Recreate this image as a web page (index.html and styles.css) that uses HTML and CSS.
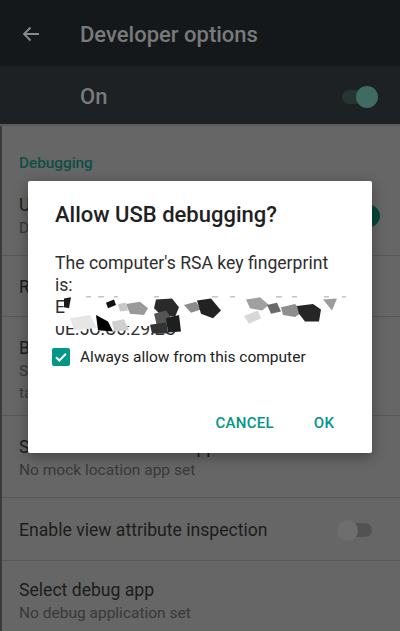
FILE: index.html
```html
<!DOCTYPE html>
<html>
<head>
<meta charset="utf-8">
<link rel="stylesheet" href="styles.css">
</head>
<body>
<div class="screen">
  <header class="toolbar">
    <svg class="back" width="24" height="24" viewBox="0 0 24 24"><path d="M20 12H5.5M11.5 5.5L5 12l6.5 6.5" fill="none" stroke="#8a8a8a" stroke-width="1.8"/></svg>
    <div class="tb-title">Developer options</div>
  </header>
  <div class="onbar">
    <div class="on-label">On</div>
    <div class="switch switch-on"><span class="track"></span><span class="thumb"></span></div>
  </div>
  <main class="list">
    <div class="section">Debugging</div>
    <div class="row r-usb">
      <div class="row-text">
        <div class="title">USB debugging</div>
        <div class="sub">Debug mode when USB is connected</div>
      </div>
      <div class="switch switch-teal"><span class="track"></span><span class="thumb"></span></div>
    </div>
    <div class="row r-revoke">
      <div class="row-text"><div class="title">Revoke USB debugging authorizations</div></div>
    </div>
    <div class="row r-bug">
      <div class="row-text narrow">
        <div class="title">Bug report shortcut</div>
        <div class="sub">Show a button in the power menu for taking a bug report</div>
      </div>
    </div>
    <div class="row r-mock">
      <div class="row-text">
        <div class="title">Select mock location app</div>
        <div class="sub">No mock location app set</div>
      </div>
    </div>
    <div class="row r-enable">
      <div class="row-text"><div class="title">Enable view attribute inspection</div></div>
      <div class="switch switch-off"><span class="track"></span><span class="thumb"></span></div>
    </div>
    <div class="row r-debug">
      <div class="row-text">
        <div class="title">Select debug app</div>
        <div class="sub">No debug application set</div>
      </div>
    </div>
  </main>

  <div class="dialog">
    <div class="d-title">Allow USB debugging?</div>
    <div class="d-body">
      <div>The computer's RSA key fingerprint is:</div>
      <div class="fp">E</div>
      <div class="fp">0E:5C:C5:29:EC</div>
      <svg class="scrub" width="300" height="52" viewBox="0 0 300 52">
        <rect x="16" y="5" width="284" height="21" fill="#fff"/>
        <rect x="0" y="25" width="180" height="8" fill="#fff"/>
        <g fill="#c4c4c4">
          <rect x="31" y="3" width="5" height="1.5"/><rect x="43" y="3" width="6" height="1.5"/>
          <rect x="59" y="3" width="4" height="1.5"/><rect x="99" y="3" width="5" height="1.5"/>
          <rect x="157" y="3" width="6" height="1.5"/><rect x="175" y="3" width="5" height="1.5"/>
          <rect x="221" y="3" width="6" height="1.5"/><rect x="237" y="3" width="5" height="1.5"/>
          <rect x="269" y="3" width="5" height="1.5"/><rect x="287" y="3" width="4" height="1.5"/>
        </g>
        <g transform="translate(7,1) scale(1,1.1)">
          <polygon points="2,4 9,3 7,13 2,12" fill="#1a1a1a"/>
          <polygon points="44,8 52,5 54,10 46,13" fill="#111"/>
          <polygon points="64,9 78,7 86,13 82,19 68,18" fill="#9a9a9a"/>
          <polygon points="56,9 64,8 66,15 58,16" fill="#c8c8c8"/>
          <polygon points="94,5 110,4 117,12 113,21 99,19 92,13" fill="#2a2a2a"/>
          <polygon points="92,18 104,15 111,24 104,31 95,29" fill="#555"/>
          <polygon points="104,22 117,19 119,34 106,35" fill="#1e1e1e"/>
          <polygon points="88,28 104,26 106,36 90,36" fill="#333"/>
          <polygon points="34,19 46,25 51,34 36,33" fill="#000"/>
          <polygon points="8,22 28,19 35,31 12,33" fill="#e6e6e6"/>
          <polygon points="50,25 62,23 67,33 52,34" fill="#cfcfcf"/>
          <polygon points="122,10 134,7 139,14 129,17" fill="#8c8c8c"/>
          <polygon points="135,6 149,4 159,15 151,22 139,18" fill="#222"/>
          <polygon points="184,5 198,3 207,10 200,15 188,13" fill="#a0a0a0"/>
          <polygon points="205,10 215,8 219,16 209,18" fill="#6a6a6a"/>
          <polygon points="219,12 233,9 241,16 233,21 221,19" fill="#8e8e8e"/>
          <polygon points="235,11 251,9 259,14 257,25 243,25 237,18" fill="#252525"/>
          <polygon points="182,20 196,15 199,22 187,27" fill="#d8d8d8"/>
          <polygon points="261,5 275,4 270,15" fill="#9c9c9c"/>
        </g>
      </svg>
    </div>
    <label class="d-check">
      <span class="box"><svg width="18" height="18" viewBox="0 0 18 18"><path d="M4 9.2l3.3 3.3L14 5.8" fill="none" stroke="#fff" stroke-width="2"/></svg></span>
      <span class="check-label">Always allow from this computer</span>
    </label>
    <div class="d-actions">
      <div class="btn">CANCEL</div>
      <div class="btn">OK</div>
    </div>
  </div>
</div>
</body>
</html>
```

FILE: styles.css
```css
* { box-sizing: border-box; }
html, body { margin: 0; padding: 0; }
body {
  font-family: Roboto, "Noto Sans", sans-serif;
  background: #666;
}
.screen {
  position: relative;
  width: 400px;
  height: 631px;
  overflow: hidden;
  background: #666;
}
.toolbar {
  height: 66px;
  background: #15181a;
  display: flex;
  align-items: center;
  padding: 2px 0 0 19px;
}
.back { flex: none; margin-right: 37px; }
.tb-title {
  color: #7a7a7a;
  font-size: 22px;
  font-weight: 500;
}
.onbar {
  height: 60px;
  background: #1d2124;
  display: flex;
  align-items: center;
  justify-content: space-between;
  padding: 3px 24px 0 80px;
  border-bottom: 2px solid #5a5a5a;
}
.on-label {
  color: #7a7a7a;
  font-size: 22px;
  font-weight: 500;
}
.switch {
  position: relative;
  width: 36px;
  height: 24px;
  flex: none;
}
.switch .track {
  position: absolute;
  left: 2px; right: 2px; top: 5px;
  height: 14px;
  border-radius: 7px;
}
.switch .thumb {
  position: absolute;
  top: 1px;
  width: 22px; height: 22px;
  border-radius: 50%;
}
.switch-on .track { background: #25352f; }
.switch-on .thumb { right: -2px; background: #3f6b63; }
.switch-teal { margin-right: 0; }
.switch-teal .track { background: #174a42; }
.switch-teal .thumb { right: -2px; background: #07463d; }
.switch-off { margin-right: 4px; }
.switch-off .track { background: #525252; }
.switch-off .thumb { left: -1px; width: 21px; height: 21px; top: 2px; background: #6e6e6e; }

.list {
  border-left: 2px solid #3c3c3c;
}
.section {
  color: #0e4f45;
  font-size: 15.3px;
  font-weight: 500;
  line-height: 20px;
  padding: 27px 17px 2px;
}
.row {
  display: flex;
  align-items: center;
  justify-content: space-between;
  padding: 18px 22px 16px 17px;
  border-bottom: 1px solid #585858;
}
.r-revoke { padding-top: 19px; padding-bottom: 17px; }
.r-bug { padding-top: 19px; padding-bottom: 11px; }
.r-mock { padding-top: 19px; padding-bottom: 16px; }
.r-enable { padding-top: 20px; padding-bottom: 18px; }
.r-debug { padding-top: 17px; }
.row-text { min-width: 0; }
.row-text.narrow { max-width: 272px; }
.title {
  color: #1c1c1c;
  font-size: 17.6px;
  line-height: 24px;
  white-space: nowrap;
}
.sub {
  color: #383838;
  font-size: 15.5px;
  line-height: 22px;
}

.dialog {
  position: absolute;
  left: 28px;
  top: 181px;
  width: 344px;
  height: 272px;
  background: #fff;
  border-radius: 2px;
  box-shadow: 0 4px 14px rgba(0,0,0,0.35);
  padding: 20px 0 0 0;
}
.d-title {
  color: #212121;
  font-size: 22px;
  font-weight: 500;
  line-height: 28px;
  padding-left: 27px;
}
.d-body {
  position: relative;
  margin-top: 23px;
  padding-left: 27px;
  padding-right: 24px;
  color: #2e2e2e;
  font-size: 17.6px;
  line-height: 22px;
}
.scrub {
  position: absolute;
  left: 27px;
  top: 41px;
}
.d-check {
  display: flex;
  align-items: center;
  margin-top: 5px;
  padding-left: 24px;
  height: 24px;
}
.box {
  width: 18px; height: 18px;
  border-radius: 2px;
  background: #009688;
  display: flex;
  margin-right: 10px;
}
.check-label {
  color: #212121;
  font-size: 15.5px;
}
.d-actions {
  display: flex;
  justify-content: flex-end;
  gap: 10px;
  margin-top: 36px;
  padding-right: 16px;
}
.btn {
  min-width: 64px;
  height: 36px;
  padding: 0 8px;
  display: flex;
  align-items: center;
  justify-content: center;
  color: #009688;
  font-size: 15px;
  font-weight: 500;
  letter-spacing: 0.3px;
}
```
